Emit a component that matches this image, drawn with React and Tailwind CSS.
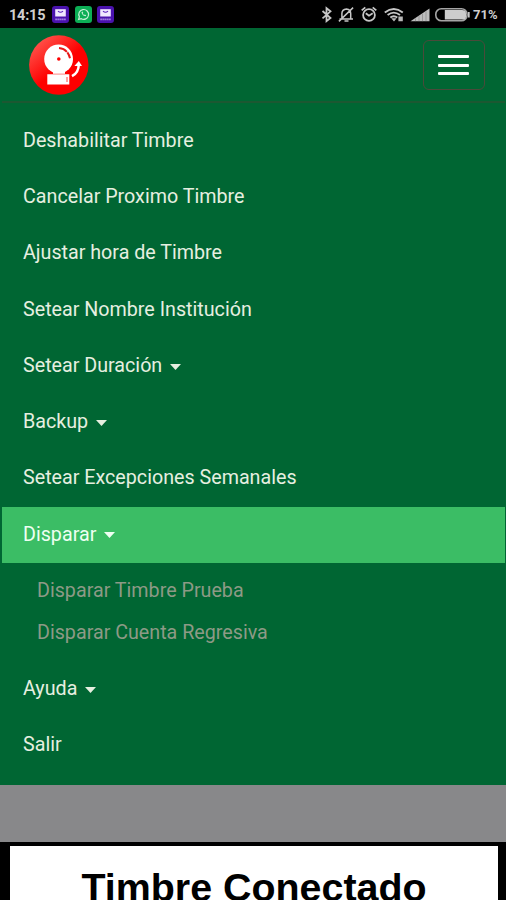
import clsx from "clsx"

const items = [
  { label: 'Deshabilitar Timbre' },
  { label: 'Cancelar Proximo Timbre' },
  { label: 'Ajustar hora de Timbre' },
  { label: 'Setear Nombre Institución' },
  { label: 'Setear Duración', caret: true },
  { label: 'Backup', caret: true },
  { label: 'Setear Excepciones Semanales' },
  { label: 'Disparar', caret: true, open: true, children: ['Disparar Timbre Prueba', 'Disparar Cuenta Regresiva'] },
  { label: 'Ayuda', caret: true },
  { label: 'Salir' },
]

const MailIcon = () => (
  <svg className="h-[17px] w-[17px]" viewBox="0 0 17 17">
    <rect width="17" height="17" rx="3" fill="#4a12ad" />
    <path d="M3.2 3.2h10.6v7.3H3.2z" fill="#f0e8ff" />
    <path d="M6 5.2q2.5 2.2 5 0" fill="none" stroke="#5a22bd" strokeWidth="1.1" />
    <path d="M3.2 13.3h10.6" stroke="#9a78de" strokeWidth="1.7" strokeDasharray="1.9 .3" />
  </svg>
)

const WhatsIcon = () => (
  <svg className="h-[17px] w-[17px]" viewBox="0 0 17 17">
    <rect width="17" height="17" rx="3" fill="#0cae55" />
    <path d="M3.6 13.4l.8-2.6a4.9 4.9 0 1 1 1.9 1.9z" fill="none" stroke="#c9efd7" strokeWidth="1.2" />
    <path d="M6.6 6.1c-.2 2 1.9 4.2 4 4.2l.6-1.1-1.4-.8-.7.6c-.7-.3-1.1-.8-1.4-1.4l.6-.7-.7-1.4z" fill="#c9efd7" />
  </svg>
)

const StatusIcons = () => (
  <svg className="h-[20px] w-[150px] shrink-0" viewBox="320 5 150 20" fill="none" stroke="#c6c6c6" strokeWidth="1.8">
    {/* bluetooth */}
    <path d="M322.5 11l8 7-4 3.2V8.2l4 3.2-8 7" />
    {/* muted bell */}
    <path d="M339.5 19h13.5M341.9 18.6V13.5q0-4 4.6-4.5 4.2.5 4.2 4.5v5M344.5 21h4M338.9 21.4l14.2-13.8" strokeWidth="1.5" />
    {/* alarm */}
    <circle cx="369" cy="15" r="5.9" />
    <path d="M365.8 13.2l3.2 2.5 3.7-2.4M361.7 10.4l3.6-3M376.3 10.4l-3.6-3" />
    {/* wifi */}
    <path d="M384.8 12.4q9-7 18 0M387.6 15q6.2-4.7 12.4 0M390.3 17.5q3.5-2.6 7 0" strokeWidth="1.9" />
    <path d="M391.2 18.2h5.4l-2.6 3.2zM398.4 16.4h4.4v4.8h-4.4z" fill="#b8b8b8" stroke="none" />
    {/* signal */}
    <path d="M410.5 21.2L429.5 8.4v12.8z" fill="#bdbdbd" stroke="none" />
    <path d="M415.5 18.5v2.7M419 16v5.2M422.5 13.8v7.4M426 11.5v9.7" stroke="#888" strokeWidth=".7" />
    {/* battery */}
    <rect x="435.8" y="8.8" width="31.2" height="12" rx="5.5" strokeWidth="1.6" stroke="#a5a5a5" />
    <path d="M444.8 10h17.2q4 0 4 3.2v3.2q0 3.2-4 3.2h-17.2z" fill="#cdcdcd" stroke="none" />
    <path d="M468.8 12v5.5" strokeWidth="1.8" />
  </svg>
)

const Logo = () => (
  <svg className="h-[60px] w-[60px]" viewBox="0 0 60 60">
    <defs>
      <linearGradient id="red" x1="0" y1="0" x2=".6" y2=".7">
        <stop offset="0" stopColor="#ff6a60" />
        <stop offset=".8" stopColor="#fe0000" />
      </linearGradient>
    </defs>
    <circle cx="29.8" cy="30" r="29.7" fill="url(#red)" />
    <circle cx="29.6" cy="24" r="14.4" fill="#fff" />
    <circle cx="29.8" cy="24" r="1.8" fill="#f00" />
    <path d="M30 13q8.5.7 11 10.2" fill="none" stroke="#e81818" strokeWidth="2" strokeDasharray="9 .8" />
    <path d="M24 35h12v4H24zM18.3 39.2h22V49.5h-22z" fill="#fff" />
    <path d="M24 38.8h12" stroke="#f88" strokeWidth=".6" />
    <path d="M38 42v5" stroke="#f44" strokeWidth="1" />
    <path d="M43 41.2q6.8-3.5 6.8-12.2" fill="none" stroke="#fff" strokeWidth="2.5" />
    <path d="M45.4 31l4.4-5 3.2 5z" fill="#fff" />
  </svg>
)

const NavItem = ({ item }) => (
  <li>
    <a className={clsx('flex h-[56.25px] items-center px-[21.5px] pb-px', item.open ? 'bg-[#3bbd65] text-[#eefff2]' : 'text-[#e6efe0]')}>
      {item.label}
      {item.caret && (
        <svg className="mt-[2px] ml-[7.5px] h-[6px] w-[11px]" viewBox="0 0 11 6" fill="currentColor"><path d="M0 0h11L5.5 6z" /></svg>
      )}
    </a>
    {item.children && (
      <ul className="py-[7px] text-[#8d9a86]">
        {item.children.map(child => (
          <li key={child} className="flex h-[42px] items-center pl-[35.5px]">{child}</li>
        ))}
      </ul>
    )}
  </li>
)

const App = () => {
  return (
    <div className="flex h-[900px] w-[506px] flex-col overflow-hidden bg-black font-['Roboto',sans-serif]">
      <div className="flex h-[28px] shrink-0 items-center pl-[9px] text-[#cfcfcf]">
        <span className="w-[43px] pt-[3px] text-[14.5px] font-bold tracking-[-0.2px]">14:15</span>
        <div className="flex gap-[5.5px]">
          <MailIcon />
          <WhatsIcon />
          <MailIcon />
        </div>
        <div className="mt-px ml-auto flex items-center pr-[7px]">
          <StatusIcons />
          <span className="w-[29px] pl-[3px] text-[13px] font-bold whitespace-nowrap">71%</span>
        </div>
      </div>

      <nav className="h-[757px] shrink-0 bg-[#006633] px-[1.5px] text-[19.7px] font-[450]">
        <div className="flex h-[75px] items-start justify-between border-b-2 border-[#1c5832] pt-[7px] pr-[20px] pl-[27px]">
          <Logo />
          <button className="mt-[5px] flex h-[50px] w-[62px] flex-col items-center justify-center gap-[5.5px] rounded-md border border-[#4a4a3a]">
            <span className="h-[3px] w-[31px] rounded-[1px] bg-white"></span>
            <span className="h-[3px] w-[31px] rounded-[1px] bg-white"></span>
            <span className="h-[3px] w-[31px] rounded-[1px] bg-white"></span>
          </button>
        </div>
        <ul className="pt-[10px]">
          {items.map(item => <NavItem key={item.label} item={item} />)}
        </ul>
      </nav>

      <div className="h-[57px] shrink-0 bg-[#88888a]"></div>
      <main className="mt-[4px] mr-[8px] ml-[10px] h-[100px] shrink-0 bg-white pt-[20px] text-center">
        <h1 className="font-['Liberation_Sans',Arial,sans-serif] text-[39.4px] leading-[1.1] font-bold text-black">Timbre Conectado</h1>
      </main>
    </div>
  )
}

export default App
